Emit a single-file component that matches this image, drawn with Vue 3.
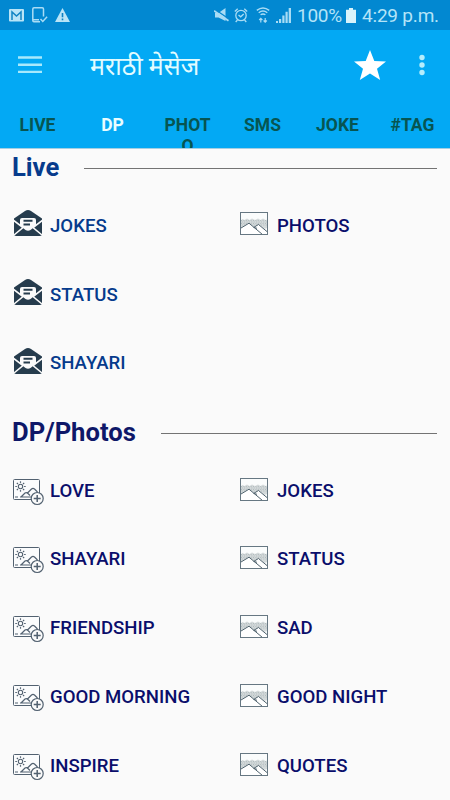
<script setup>
const tabs = ['LIVE', 'DP', 'PHOTO', 'SMS', 'JOKE', '#TAG']
const sections = [
  {
    title: 'Live', kind: 'live',
    rows: [['JOKES', 'PHOTOS'], ['STATUS'], ['SHAYARI']],
  },
  {
    title: 'DP/Photos', kind: 'photos',
    rows: [['LOVE', 'JOKES'], ['SHAYARI', 'STATUS'], ['FRIENDSHIP', 'SAD'], ['GOOD MORNING', 'GOOD NIGHT'], ['INSPIRE', 'QUOTES']],
  },
]
const rays = [0, 45, 90, 135, 180, 225, 270, 315]
</script>

<template>
  <div class="screen">
    <header>
      <div class="status">
        <svg class="gmail" width="15" height="13" viewBox="0 0 15 13">
          <rect width="15" height="12.5" rx="1" fill="#b9e4f7" />
          <path d="M3 11V3l4.500 4L12 3v8" fill="none" stroke="#1184c4" stroke-width="1.500" />
        </svg>
        <svg class="device" width="16" height="16" viewBox="0 0 16 16" fill="none" stroke="#a9dcf5" stroke-width="1.500">
          <path d="M11.500 9.500V2q0-1.200-1.200-1.200H2Q.8.8.8 2v11.500q0 1.200 1.200 1.200h6M1 12.800h6" />
          <path d="M8.500 12l2.300 2.500 4.300-4.700" />
        </svg>
        <svg class="warn" width="15" height="14" viewBox="0 0 15 14">
          <path d="M7.500 0L15 14H0z" fill="#b9e4f7" />
          <path d="M7.500 5v4.300M7.500 10.500v1.700" stroke="#0b80c2" stroke-width="1.600" />
        </svg>
        <span class="spacer"></span>
        <svg class="mute" width="16" height="15" viewBox="0 0 16 15">
          <path d="M1 5h3.500L11.500 0v13L4.500 9.500H1z" fill="#a9dcf5" />
          <path d="M1 1.500l14 9.500" stroke="#0887cf" stroke-width="1.500" />
          <path d="M0 2.800l14.500 10" stroke="#a9dcf5" stroke-width="1.700" />
        </svg>
        <svg class="alarm" width="14" height="15" viewBox="0 0 14 15" fill="none" stroke="#a9dcf5" stroke-width="1.300">
          <circle cx="7" cy="7.500" r="5.200" />
          <path d="M.8 3.500L3.700.8M13.200 3.500L10.300.8M3.500 12l-1.800 2M10.500 12l1.800 2M4.500 7l2.200 1.800 3-2.800" />
        </svg>
        <svg class="wifi" width="14" height="16" viewBox="0 0 14 16" fill="none" stroke="#a9dcf5" stroke-width="1.400">
          <path d="M.8 3.400q6.200-4.800 12.400 0M2.700 5.700q4.300-3.300 8.600 0M4.600 7.800q2.400-1.700 4.800 0" />
          <path d="M4.800 15.500v-4M9.200 11v4M3.200 13l1.600-1.700L6.400 13M7.600 13.500l1.600 1.700 1.600-1.700" stroke-width="1.200" />
        </svg>
        <svg class="signal" width="15" height="15" viewBox="0 0 15 15" fill="#a9dcf5">
          <path d="M0 13h2v2H0zM3 11h2.200v4H3zM6.300 7.500h2.200V15H6.300zM9.500 3.800h2.200V15H9.500zM12.700 0H15v15h-2.300z" />
        </svg>
        <span class="percent">100%</span>
        <svg class="battery" width="10" height="15" viewBox="0 0 10 15">
          <path d="M3 0h4v1.700h3V15H0V1.700h3z" fill="#d9f3fb" />
        </svg>
        <span class="clock">4:29 p.m.</span>
      </div>
      <div class="toolbar">
        <svg class="menu" width="24" height="18" viewBox="0 0 24 18">
          <path d="M0 1.500h24M0 8.700h24M0 15.900h24" stroke="#a8e9fc" stroke-width="2.400" />
        </svg>
        <h1>मराठी मेसेज</h1>
        <svg class="star" width="32" height="30" viewBox="0 0 32 30">
          <path d="M16 0l4.300 10.900L32 11.500l-9 7.300 3.200 11.200L16 23.600 5.800 30 9 18.800 0 11.500l11.700-.6z" fill="#fff" />
        </svg>
        <svg class="more" width="6" height="22" viewBox="0 0 6 22" fill="#b5edfc">
          <circle cx="3" cy="3.500" r="2.700" /><circle cx="3" cy="11" r="2.700" /><circle cx="3" cy="18.500" r="2.700" />
        </svg>
      </div>
      <nav>
        <span v-for="tab in tabs" :key="tab" class="tab" :class="{ active: tab === 'DP' }">{{ tab }}</span>
      </nav>
    </header>
    <main>
      <section v-for="section in sections" :key="section.title" :class="section.kind">
        <div class="heading"><h2>{{ section.title }}</h2><i></i></div>
        <div v-for="(row, r) in section.rows" :key="r" class="row">
          <div v-for="(label, c) in row" :key="label" class="item" :class="{ second: c === 1 }">
            <svg v-if="c === 1" class="icon" width="30" height="26" viewBox="0 0 30 26">
              <rect x="1" y="1" width="28" height="23" fill="#fafcfc" />
              <path d="M1.500 9.500l2-1.500 2 1 2.500-1.500 2.500 1.500L13 7.500l3 1.500 3-1.500L21.500 9 24 7.500 26.500 9l2-.5V17l-3.500 1-5-4-4 3-6-5-8.500 5z" fill="#d3d9da" />
              <path d="M2 9.500h26M2.700 11h25M2 12.500h26M2.700 14h25" stroke="#a3afb2" stroke-width=".7" stroke-dasharray="1 1.400" />
              <path d="M1.500 17L10 12l5 4 5-2.500 8.500 7V24h-27z" fill="#fff" />
              <path d="M1.200 17.500L10 12.200 23.500 23.500M14.500 16.500l5-3 9 7.500M15 16.500l3 .8" fill="none" stroke="#4f626d" stroke-width="1" />
              <rect x="1.500" y="1.500" width="27" height="22" fill="none" stroke="#667782" stroke-width="1" />
            </svg>
            <svg v-else-if="section.kind === 'live'" class="icon mail" width="30" height="28" viewBox="0 0 30 28">
              <path d="M1 9.500L12 2q3-2 6 0L29 9.500V25q0 2-2 2H3q-2 0-2-2z" fill="#263c4d" />
              <path d="M0 11l10 7.500L1 26M30 11l-10 7.500 9 7.500" fill="none" stroke="#fafafa" stroke-width="1.600" />
              <path d="M7 11q0-2 2-2h12q2 0 2 2v5.500L17.500 21q-2.500 1.300-5 0L7 16.500z" fill="#fafafa" />
              <path d="M10.500 11.800h9M10.500 15.500h6.500" stroke="#263c4d" stroke-width="1.900" />
            </svg>
            <svg v-else class="icon add" width="32" height="28" viewBox="0 0 32 28" fill="none" stroke="#526170">
              <rect x="1.500" y="1.500" width="26" height="20" rx="1" fill="#fbfcfd" />
              <circle cx="8.500" cy="8.500" r="2.200" stroke-width="1.100" />
              <path v-for="angle in rays" :key="angle" d="M8.500 3.300v1.600" :transform="`rotate(${angle} 8.500 8.500)`" stroke-width="1.200" />
              <path d="M3 19h3M9 19l4-4q1.500-1 3 .5l2 2M15.500 15l4-4q1.500-1.300 3 0l3 3M8 19h12" stroke-width="1.200" />
              <circle cx="25.200" cy="20.500" r="6" fill="#fafafa" stroke-width="1.200" />
              <path d="M25.200 17v7M21.700 20.500h7" stroke-width="1.500" />
            </svg>
            <span>{{ label }}</span>
          </div>
        </div>
      </section>
    </main>
  </div>
</template>

<style>
body { margin: 0; background: #fafafa; }
</style>

<style scoped>
.screen { width: 450px; height: 800px; overflow: hidden; background: #fafafa; font-family: Roboto, "Noto Sans", sans-serif; }
header { height: 149px; overflow: hidden; background: #03a9f4; border-bottom: 1px solid #a5cfe2; box-sizing: border-box; }
.status { display: flex; align-items: center; height: 30px; padding: 0 11px 0 9px; box-sizing: border-box; background: #0288d1; color: #b4e4f8; font-size: 19px; line-height: 31px; white-space: nowrap; }
.status svg { flex: none; }
.device { margin-left: 8px; }
.warn { margin-left: 7px; }
.spacer { flex: 1; }
.alarm { margin-left: 4px; }
.wifi { margin-left: 8px; }
.signal { margin-left: 6px; }
.percent { width: 45px; margin-left: 6px; letter-spacing: -0.300px; }
.battery { margin-left: 4px; }
.clock { width: 77px; margin-left: 6px; letter-spacing: -0.200px; }
.toolbar { display: flex; align-items: center; height: 70px; padding: 0 25px 0 18px; }
.toolbar svg { flex: none; }
h1 { flex: 1; margin: 4px 0 0 48px; color: #e3fcff; font-size: 25px; font-weight: 400; line-height: 32px; }
.star { margin-right: 33px; }
nav { display: grid; grid-template-columns: repeat(6, 75px); height: 48px; padding-top: 15px; box-sizing: border-box; overflow: hidden; }
.tab { padding: 0 14px; color: #075551; font-size: 17.500px; font-weight: 700; line-height: 20.500px; text-align: center; word-break: break-all; }
.tab:last-child { padding: 0 12px; }
.tab.active { color: #e9fdff; }
.heading { display: flex; align-items: center; margin-bottom: 3px; padding: 0 13px 0 12px; height: 38px; }
.heading h2 { margin: 0; padding-bottom: 2px; color: #063b8c; font-size: 25.600px; font-weight: 700; line-height: 30px; }
.heading i { flex: 1; height: 1px; margin-left: 25px; background: #737373; }
.photos .heading { margin-top: 18px; }
.photos h2 { color: #0e1768; }
.row { display: grid; grid-template-columns: 227px 1fr; height: 68.750px; padding-left: 12px; }
.item { display: flex; align-items: center; color: #063b8c; font-size: 18.600px; font-weight: 500; white-space: nowrap; }
.item span { margin-left: 8px; padding-top: 3px; }
.photos .item span { padding-top: 2px; }
.mail { margin: 0 -1px 2px 1px; }
.item .add { margin: 4px -2px 0 0; }
.second, .photos .item { color: #0a0e6b; }
</style>
